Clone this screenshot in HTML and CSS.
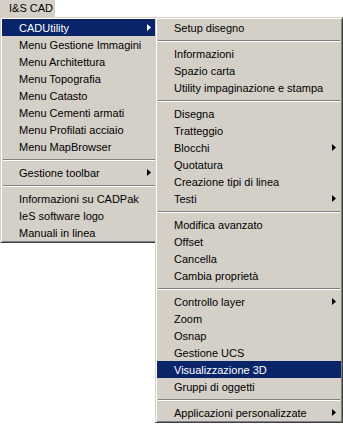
FILE: index.html
```html
<!DOCTYPE html>
<html lang="it">
<head>
    <meta charset="UTF-8">
    <meta name="viewport" content="width=device-width, initial-scale=1.0">
    <title>I&amp;S CAD</title>
    <link rel="stylesheet" href="styles.css">
</head>
<body>
    <div class="menubar">
        <span class="menubar-item">I&amp;S CAD</span>
    </div>
    <div class="menus">
        <ul class="menu menu-main">
            <li class="item active"><span class="label">CADUtility</span><svg class="arrow" width="4" height="7" viewBox="0 0 4 7"><polygon points="0,0 4,3.5 0,7"/></svg></li>
            <li class="item"><span class="label">Menu Gestione Immagini</span></li>
            <li class="item"><span class="label">Menu Architettura</span></li>
            <li class="item"><span class="label">Menu Topografia</span></li>
            <li class="item"><span class="label">Menu Catasto</span></li>
            <li class="item"><span class="label">Menu Cementi armati</span></li>
            <li class="item"><span class="label">Menu Profilati acciaio</span></li>
            <li class="item"><span class="label">Menu MapBrowser</span></li>
            <li class="sep"></li>
            <li class="item"><span class="label">Gestione toolbar</span><svg class="arrow" width="4" height="7" viewBox="0 0 4 7"><polygon points="0,0 4,3.5 0,7"/></svg></li>
            <li class="sep"></li>
            <li class="item"><span class="label">Informazioni su CADPak</span></li>
            <li class="item"><span class="label">IeS software logo</span></li>
            <li class="item"><span class="label">Manuali in linea</span></li>
        </ul>
        <ul class="menu menu-sub">
            <li class="item"><span class="label">Setup disegno</span></li>
            <li class="sep"></li>
            <li class="item"><span class="label">Informazioni</span></li>
            <li class="item"><span class="label">Spazio carta</span></li>
            <li class="item"><span class="label">Utility impaginazione e stampa</span></li>
            <li class="sep"></li>
            <li class="item"><span class="label">Disegna</span></li>
            <li class="item"><span class="label">Tratteggio</span></li>
            <li class="item"><span class="label">Blocchi</span><svg class="arrow" width="4" height="7" viewBox="0 0 4 7"><polygon points="0,0 4,3.5 0,7"/></svg></li>
            <li class="item"><span class="label">Quotatura</span></li>
            <li class="item"><span class="label">Creazione tipi di linea</span></li>
            <li class="item"><span class="label">Testi</span><svg class="arrow" width="4" height="7" viewBox="0 0 4 7"><polygon points="0,0 4,3.5 0,7"/></svg></li>
            <li class="sep"></li>
            <li class="item"><span class="label">Modifica avanzato</span></li>
            <li class="item"><span class="label">Offset</span></li>
            <li class="item"><span class="label">Cancella</span></li>
            <li class="item"><span class="label">Cambia proprietà</span></li>
            <li class="sep"></li>
            <li class="item"><span class="label">Controllo layer</span><svg class="arrow" width="4" height="7" viewBox="0 0 4 7"><polygon points="0,0 4,3.5 0,7"/></svg></li>
            <li class="item"><span class="label">Zoom</span></li>
            <li class="item"><span class="label">Osnap</span></li>
            <li class="item"><span class="label">Gestione UCS</span></li>
            <li class="item active"><span class="label">Visualizzazione 3D</span></li>
            <li class="item"><span class="label">Gruppi di oggetti</span></li>
            <li class="sep"></li>
            <li class="item"><span class="label">Applicazioni personalizzate</span><svg class="arrow" width="4" height="7" viewBox="0 0 4 7"><polygon points="0,0 4,3.5 0,7"/></svg></li>
        </ul>
    </div>
</body>
</html>
```

FILE: styles.css
```css
body {
    margin: 0;
    background-color: #ffffff;
    font-family: 'Liberation Sans', Arial, sans-serif;
    font-size: 11px;
    color: #000000;
    overflow: hidden;
}
.menubar {
    display: flex;
    height: 17px;
}
.menubar-item {
    width: 55px;
    padding-left: 9px;
    box-sizing: border-box;
    background-color: #d4d0c8;
    line-height: 16px;
}
.menus {
    display: flex;
    align-items: flex-start;
}
.menu {
    list-style: none;
    margin: 0;
    padding: 1px;
    background-color: #d4d0c8;
    border: 1px solid;
    border-color: #d4d0c8 #404040 #404040 #d4d0c8;
    box-shadow: inset 1px 1px #ffffff, inset -1px -1px #808080;
}
.menu-main {
    width: 158px;
    box-sizing: border-box;
}
.menu-sub {
    width: 188px;
    box-sizing: border-box;
    margin-left: -3px;
}
.item {
    display: flex;
    align-items: center;
    height: 17px;
    padding-left: 17px;
    padding-right: 5px;
    white-space: nowrap;
}
.item .label {
    flex: 1;
}
.arrow {
    fill: #000000;
    display: block;
}
.active {
    background-color: #0a246a;
    color: #ffffff;
}
.active .arrow {
    fill: #ffffff;
}
.sep {
    height: 0;
    margin: 4px 1px 3px;
    border-top: 1px solid #808080;
    border-bottom: 1px solid #ffffff;
}
```
